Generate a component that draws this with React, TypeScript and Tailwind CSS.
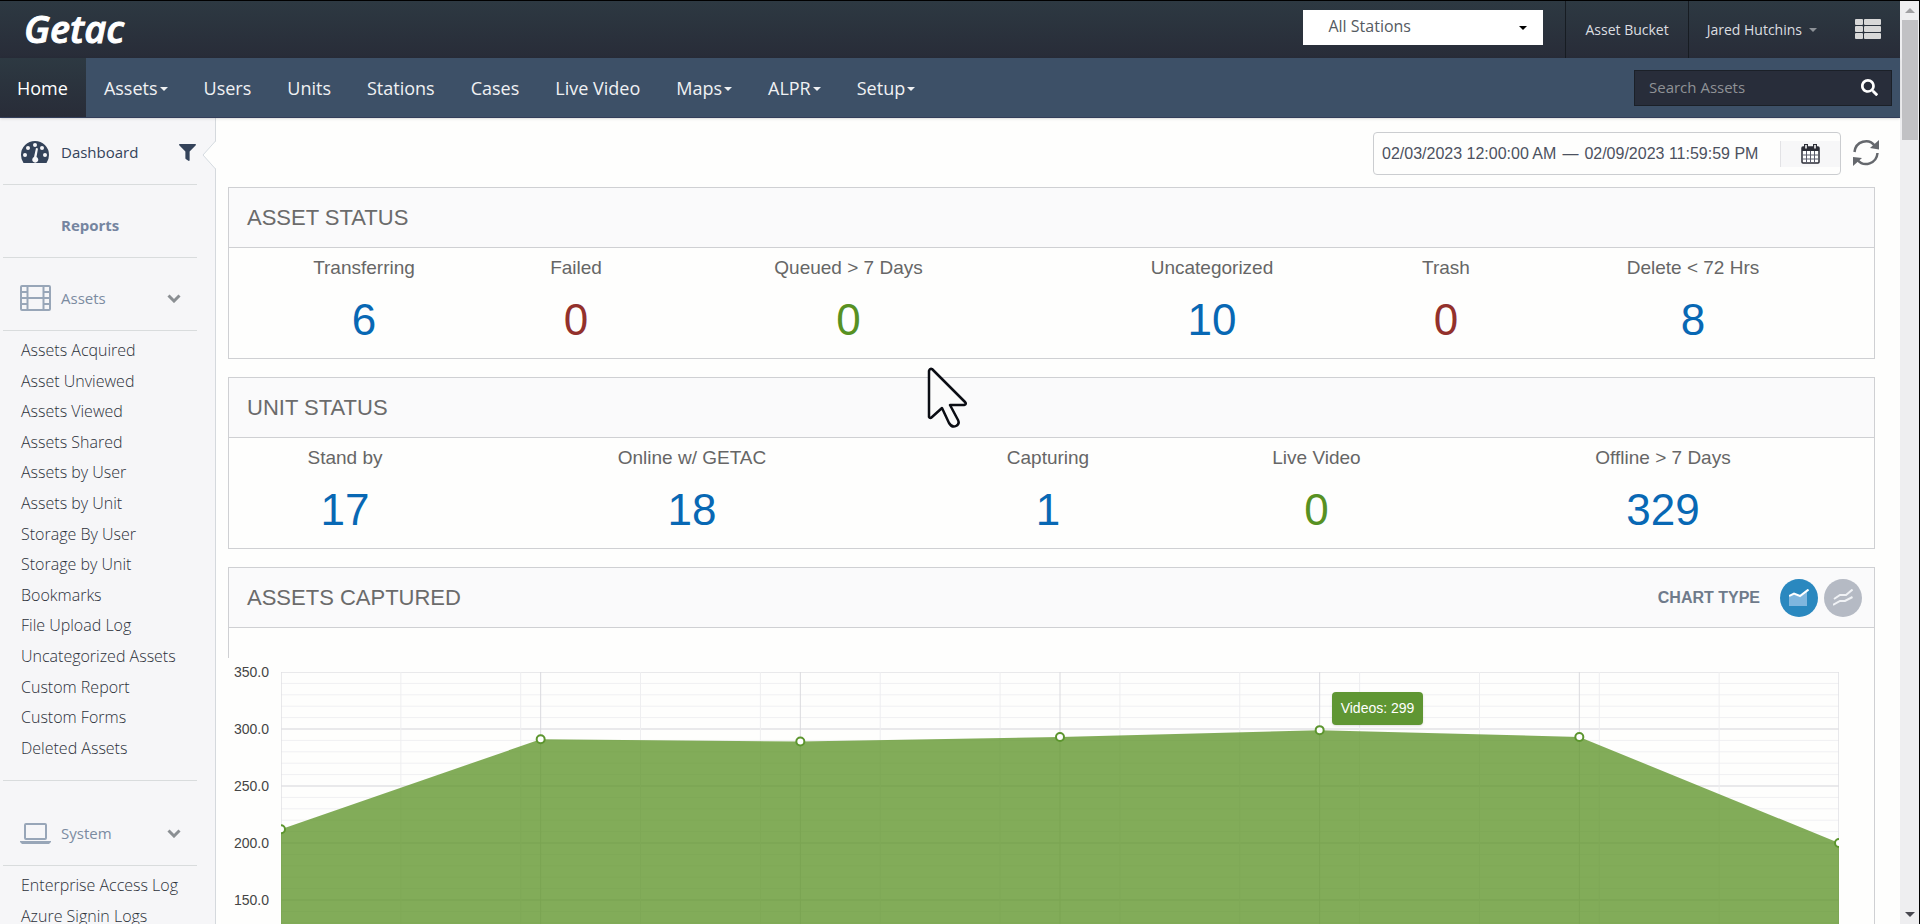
import React, { useState } from "react";
import { FaFilter, FaSearch } from "react-icons/fa";

const navItems = [
  { label: "Home", active: true },
  { label: "Assets", menu: true },
  { label: "Users" },
  { label: "Units" },
  { label: "Stations" },
  { label: "Cases" },
  { label: "Live Video" },
  { label: "Maps", menu: true },
  { label: "ALPR", menu: true },
  { label: "Setup", menu: true },
];

const assetLinks = [
  "Assets Acquired", "Asset Unviewed", "Assets Viewed", "Assets Shared", "Assets by User", "Assets by Unit",
  "Storage By User", "Storage by Unit", "Bookmarks", "File Upload Log", "Uncategorized Assets",
  "Custom Report", "Custom Forms", "Deleted Assets",
];

const systemLinks = ["Enterprise Access Log", "Azure Signin Logs"];

const BLUE = "text-[#0868b4]";
const RED = "text-[#93312c]";
const GREEN = "text-[#579122]";

const assetStatus = [
  { label: "Transferring", value: 6, color: BLUE },
  { label: "Failed", value: 0, color: RED },
  { label: "Queued > 7 Days", value: 0, color: GREEN },
  { label: "Uncategorized", value: 10, color: BLUE },
  { label: "Trash", value: 0, color: RED },
  { label: "Delete < 72 Hrs", value: 8, color: BLUE },
];

const unitStatus = [
  { label: "Stand by", value: 17, color: BLUE },
  { label: "Online w/ GETAC", value: 18, color: BLUE },
  { label: "Capturing", value: 1, color: BLUE },
  { label: "Live Video", value: 0, color: GREEN },
  { label: "Offline > 7 Days", value: 329, color: BLUE },
];

const videos = [212, 291, 289, 293, 299, 293, 200];
const ticks = ["350.0", "300.0", "250.0", "200.0", "150.0", "100.0", "50.0"];

const PLOT_W = 1558;
const PLOT_H = 399;
const px = (i: number) => (PLOT_W / 6) * i;
const py = (v: number) => PLOT_H - (v / 350) * PLOT_H;

function Caret({ className = "" }: { className?: string }) {
  return (
    <svg width="8" height="4" viewBox="0 0 8 4" className={className}>
      <path d="M0 0h8L4 4z" fill="currentColor" />
    </svg>
  );
}

function Stats({ items, cols }: { items: typeof assetStatus; cols: string }) {
  return (
    <dl className={`grid h-[110px] pt-2 text-center ${cols}`}>
      {items.map((s) => (
        <div key={s.label}>
          <dt className="text-[19px] leading-6 text-[#666]">{s.label}</dt>
          <dd className={`mt-4 text-[44px] leading-[48px] ${s.color}`}>{s.value}</dd>
        </div>
      ))}
    </dl>
  );
}

function Panel({ title, extra, children }: { title: string; extra?: React.ReactNode; children: React.ReactNode }) {
  return (
    <section className="mb-[18px] border border-[#cfd0d3] bg-[#fefefd]">
      <div className="flex h-[60px] items-center justify-between border-b border-[#cfd0d3] bg-[#fafafb] pr-3 pl-[18px]">
        <h2 className="text-[22px] leading-7 text-[#6b6b6b]">{title}</h2>
        {extra}
      </div>
      {children}
    </section>
  );
}

function GroupHead({ icon, label }: { icon: React.ReactNode; label: string }) {
  return (
    <button className="flex h-[72px] w-full items-center pt-2 text-left text-[15px] text-[#7b8ba1]">
      <span className="mr-[9px] ml-[17px] w-8">{icon}</span>
      {label}
      <svg width="14" height="9" viewBox="0 0 14 9" className="mr-4 ml-auto text-[#8b8f93]">
        <path d="M1.5 1.5L7 7l5.500-5.500" fill="none" stroke="currentColor" strokeWidth="3" />
      </svg>
    </button>
  );
}

function Chart() {
  const line = videos.map((v, i) => `${px(i)},${py(v)}`).join(" ");
  return (
    <div className="relative -ml-px mt-[30px] flex bg-[#fefefd] pr-[35px] pt-[14px]">
      <div className="w-[53px] shrink-0 pr-3 text-right text-[14px] text-[#454545]">
        {ticks.map((t) => (
          <div key={t} className="h-[57px] leading-[0px]">{t}</div>
        ))}
      </div>
      <div className="relative flex-1">
        <svg viewBox={`0 0 ${PLOT_W} ${PLOT_H}`} preserveAspectRatio="none" className="block h-[399px] w-full">
          {Array.from({ length: 36 }, (_, i) => (
            <line key={i} x1="0" x2={PLOT_W} y1={i * 11.4} y2={i * 11.4} stroke={i % 5 ? "#f0f0f2" : "#e2e2e5"} strokeWidth={i % 5 ? 1 : 1.5} />
          ))}
          {Array.from({ length: 14 }, (_, i) => (
            <line key={i} y1="0" y2={PLOT_H} x1={(PLOT_W / 13) * i} x2={(PLOT_W / 13) * i} stroke="#eeeef0" />
          ))}
          {videos.map((_, i) => (
            <line key={i} y1="0" y2={PLOT_H} x1={px(i)} x2={px(i)} stroke="#dadade" />
          ))}
          <polygon points={`0,${PLOT_H} ${line} ${PLOT_W},${PLOT_H}`} fill="#5f952a" fillOpacity="0.78" />
          {videos.map((v, i) => (
            <circle key={i} cx={px(i)} cy={py(v)} r="4" fill="#fff" stroke="#5c952e" strokeWidth="2" />
          ))}
        </svg>
        <div className="absolute top-5 left-2/3 ml-3 rounded bg-[#5f9633] px-[9px] text-[14px] leading-[33px] text-white shadow">
          Videos: 299
        </div>
      </div>
    </div>
  );
}

export default function App() {
  const [chartType, setChartType] = useState<"area" | "line">("area");

  return (
    <div className="flex h-screen overflow-hidden border-t border-r border-black bg-[#fefefd] font-['Open_Sans',sans-serif]">
      <div className="flex min-w-0 flex-1 flex-col">
        {/* Top bar */}
        <header className="flex h-[57px] shrink-0 bg-linear-to-b from-[#2d3942] to-[#282c38] text-[14px] text-[#dcdee0]">
          <a href="#" className="ml-6 pt-1 text-[38px] leading-[46px] font-semibold text-white italic [-webkit-text-stroke:1px_white]">Getac</a>
          <div className="relative mt-[9px] mr-[22px] ml-auto h-[35px] w-[240px] bg-white">
            <select aria-label="Stations" className="h-full w-full appearance-none pb-1 pl-[25px] text-[16px] text-[#555a62] outline-none">
              <option>All Stations</option>
            </select>
            <Caret className="pointer-events-none absolute top-4 right-4 text-black" />
          </div>
          <a href="#" className="flex items-center border-l border-[#171c22] px-[19px]">Asset Bucket</a>
          <button className="flex items-center gap-[7px] border-l border-[#171c22] pr-[38px] pl-[18px]">
            Jared Hutchins <Caret className="text-[#8d9298]" />
          </button>
          <button aria-label="Menu" className="mr-[19px]">
            <svg width="26" height="21" viewBox="0 0 26 21" fill="#d8d8d8">
              {[0, 7, 14].map((y) => (
                <g key={y}>
                  <rect x="0" y={y} width="8" height="6" rx="1" />
                  <rect x="9" y={y} width="17" height="6" rx="1" />
                </g>
              ))}
            </svg>
          </button>
        </header>

        {/* Main navigation */}
        <nav className="relative z-10 flex h-[60px] shrink-0 items-center border-b border-[#333e5a] bg-[#3d5067] text-[18px] text-[#f0f1f3] shadow">
          {navItems.map((item) => (
            <a
              key={item.label}
              href="#"
              className={`flex h-full items-center gap-[2px] pt-[2px] pr-[18px] ${item.active ? "bg-linear-to-b from-[#2d3942] to-[#282c38] pl-[17px] text-white" : "pl-[18px]"}`}
            >
              {item.label}
              {item.menu && <Caret />}
            </a>
          ))}
          <form className="mr-2 ml-auto flex h-9 w-[258px] border border-[#1b2028] bg-[#282d3a]">
            <input type="text" aria-label="Search Assets" placeholder="Search Assets" className="min-w-0 flex-1 pl-[14px] text-[15px] outline-none placeholder:text-[#8f9296]" />
            <button type="button" aria-label="Search" className="w-11 pl-[14px] text-white"><FaSearch size={17} /></button>
          </form>
        </nav>

        <div className="flex min-h-0 flex-1">
          {/* Sidebar */}
          <aside className="relative w-[216px] shrink-0 border-r border-[#d5d9dd] bg-[#f6f6f8] pr-[18px] pl-[3px]">
            <svg width="14" height="28" viewBox="0 0 14 28" className="absolute top-[23px] -right-px">
              <path d="M14 0L1 14l13 14z" fill="#fefefd" />
              <path d="M13.500 0L1 14l12.500 14" fill="none" stroke="#d5dbe0" />
            </svg>
            <a href="#" className="flex h-[67px] items-center border-b border-[#d9dcdd] pt-[2px] text-[15px] text-[#34435a]">
              <svg width="30" height="24" viewBox="0 0 30 24" className="mr-[11px] ml-[17px]">
                <path d="M3.500 23A14 14 0 0 1 1 15a14 14 0 0 1 28 0 14 14 0 0 1-2.500 8z" fill="#34435a" />
                <g fill="#f6f6f8">
                  <circle cx="5" cy="15" r="2" />
                  <circle cx="8" cy="8" r="2" />
                  <circle cx="15" cy="5" r="2" />
                  <circle cx="22" cy="8" r="2" />
                  <circle cx="25" cy="15" r="2" />
                  <path d="M16 8l2 .5-1.500 8.500a3 3 0 1 1-2.500 0z" />
                </g>
              </svg>
              Dashboard
              <FaFilter size={17} className="mr-px ml-auto" />
            </a>
            <a href="#" className="flex h-[73px] items-center border-b border-[#d9dcdd] pt-2 pl-[58px] text-[15px] font-bold text-[#7585a0]">Reports</a>
            <div className="border-b border-[#d9dcdd]">
              <GroupHead
                label="Assets"
                icon={
                  <svg width="31" height="26" viewBox="0 0 31 26" fill="none" stroke="#98a6b8" strokeWidth="2">
                    <rect x="1" y="1" width="29" height="24" rx="1" />
                    <path d="M7.500 1v24M23.500 1v24M7.500 13h16M1 7h6.500M1 13h6.500M1 19h6.500M23.500 7H30M23.500 13H30M23.500 19H30" />
                  </svg>
                }
              />
            </div>
            <ul className="flex h-[437px] flex-col justify-between pt-[7px] pb-2 pl-[18px] text-[16px] leading-6 font-light text-[#2c313a]">
              {assetLinks.map((l) => (
                <li key={l}><a href="#">{l}</a></li>
              ))}
            </ul>
            <div className="mt-3 border-t border-b border-[#d9dcdd] pt-3">
              <GroupHead
                label="System"
                icon={
                  <svg width="31" height="21" viewBox="0 0 31 21" fill="none" stroke="#98a6b8" strokeWidth="2">
                    <rect x="5" y="1" width="21" height="15" rx="1" />
                    <path d="M0 18h31v1l-2 2H2l-2-2z" fill="#98a6b8" stroke="none" />
                  </svg>
                }
              />
            </div>
            <ul className="pt-1 pl-[18px] text-[16px] leading-[31px] font-light text-[#2c313a]">
              {systemLinks.map((l) => (
                <li key={l}><a href="#">{l}</a></li>
              ))}
            </ul>
          </aside>

          {/* Dashboard */}
          <main className="min-w-0 flex-1 overflow-hidden pr-[25px] pl-3 font-['Liberation_Sans',sans-serif]">
            <div className="-mr-1 flex h-[69px] items-center justify-end">
              <div className="mt-[2px] flex h-[43px] w-[468px] items-center rounded-sm border border-[#cbcdd0] pl-2 text-[16px] text-[#4c5160]">
                <span>02/03/2023 12:00:00 AM</span>
                <span className="mx-[6px]">—</span>
                <span>02/09/2023 11:59:59 PM</span>
                <button aria-label="Pick dates" className="ml-auto flex h-[26px] w-[60px] items-center justify-center border-l border-[#e2e2e5] bg-[#f7f7f8]">
                  <svg width="19" height="20" viewBox="0 0 19 20">
                    <rect x="1" y="3" width="17" height="16" rx="1" fill="#fff" stroke="#2b2d36" strokeWidth="1.500" />
                    <path d="M1 3h17v4H1z" fill="#2b2d36" />
                    <path d="M5.500 7v12M9.500 7v12M13.500 7v12M1 11h17M1 15h17" stroke="#5a5c6b" />
                    <path d="M5 0v5M14 0v5" stroke="#2b2d36" strokeWidth="4" />
                    <path d="M5 1v3.500M14 1v3.500" stroke="#fff" strokeWidth="1.500" />
                  </svg>
                </button>
              </div>
              <button aria-label="Refresh" className="ml-3">
                <svg width="26" height="28" viewBox="0 0 26 28" fill="none" stroke="#65686d" strokeWidth="2.500">
                  <path d="M1.500 13A11.500 12 0 0 1 22 7M24.500 14A11.500 12 0 0 1 4.500 21" />
                  <path d="M26 1v9.500L17 9zM0 27v-9l9 1z" fill="#65686d" stroke="none" />
                </svg>
              </button>
            </div>

            <Panel title="ASSET STATUS">
              <Stats items={assetStatus} cols="grid-cols-[270fr_154fr_391fr_336fr_132fr_362fr]" />
            </Panel>

            <Panel title="UNIT STATUS">
              <Stats items={unitStatus} cols="grid-cols-[232fr_462fr_250fr_287fr_406fr] pr-2" />
            </Panel>

            <Panel
              title="ASSETS CAPTURED"
              extra={
                <div className="flex items-center gap-[6px]">
                  <span className="mr-[14px] text-[16px] font-bold text-[#6f7b8b]">CHART TYPE</span>
                  <button
                    aria-label="Area chart"
                    onClick={() => setChartType("area")}
                    className={`flex size-[38px] items-center justify-center rounded-full ${chartType === "area" ? "bg-[#2a88bf]" : "bg-[#b5bac4]"}`}
                  >
                    <svg width="20" height="17" viewBox="0 0 20 17">
                      <path d="M0 8l5-3 6 3 7-6v15H0z" fill="#7fb6de" />
                      <path d="M0 7l5-2.500 6 2.500 8.500-6.500" fill="none" stroke="#fff" strokeWidth="2" />
                    </svg>
                  </button>
                  <button
                    aria-label="Line chart"
                    onClick={() => setChartType("line")}
                    className={`flex size-[38px] items-center justify-center rounded-full ${chartType === "line" ? "bg-[#2a88bf]" : "bg-[#b5bac4]"}`}
                  >
                    <svg width="20" height="17" viewBox="0 0 20 17" fill="none" stroke="#f0f2f5" strokeWidth="2">
                      <path d="M1 10l6-4h6l6.500-5.500M0 16l7-4h5l7.500-4" />
                    </svg>
                  </button>
                </div>
              }
            >
              <Chart />
            </Panel>
          </main>
        </div>
      </div>

      {/* Scrollbar */}
      <div className="flex w-[19px] shrink-0 flex-col items-center bg-[#eeeef0] pt-[7px] pb-[7px]">
        <svg width="10" height="5" viewBox="0 0 10 5"><path d="M0 5h10L5 0z" fill="#a0a0a3" /></svg>
        <div className="mt-[7px] h-[120px] w-4 bg-[#c1c1c4]" />
        <svg width="10" height="5" viewBox="0 0 10 5" className="mt-auto"><path d="M0 0h10L5 5z" fill="#484850" /></svg>
      </div>

      {/* Pointer */}
      <svg width="42" height="62" viewBox="0 0 42 62" className="pointer-events-none absolute top-[367px] left-[927px] z-20">
        <path d="M2 4v46q1 2 3 0L15 41l7 15q3 5 7 3 4-2 2-6L23 38h14q3-1 1-3L5 2Q3 1 2 4z" fill="#fbfbfb" stroke="#0b0d14" strokeWidth="2.500" strokeLinejoin="round" />
      </svg>
    </div>
  );
}
